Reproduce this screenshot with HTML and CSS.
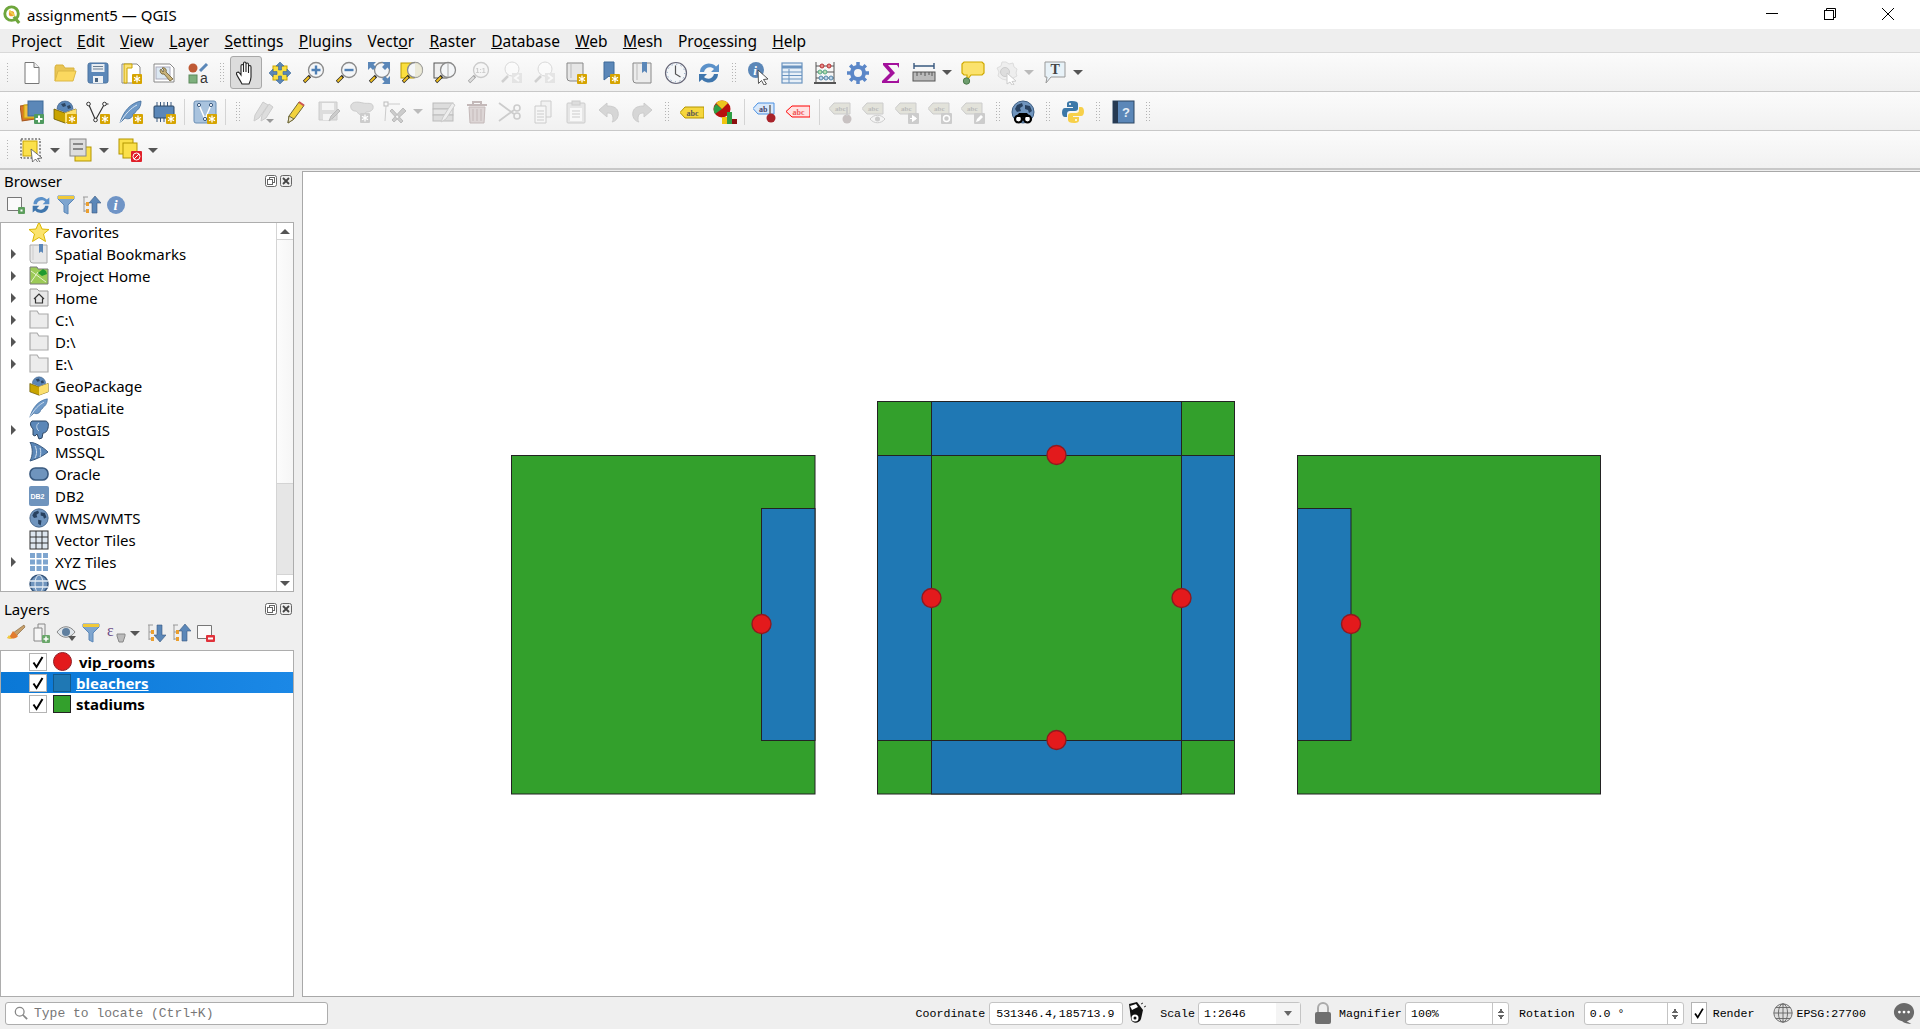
FILE: index.html
```html
<!DOCTYPE html>
<html lang="en">
<head>
    <meta charset="UTF-8">
    <title>assignment5 — QGIS</title>
    <link rel="stylesheet" href="styles.css">
</head>
<body>
<svg class="defs" xmlns="http://www.w3.org/2000/svg">
    <g id="badge"><rect width="10" height="10" rx="1" fill="#d6a400"/><path d="M5 1.5v7M2 3.2l6 3.6M8 3.2L2 6.8" stroke="#fff" stroke-width="1.3"/></g>
    <symbol id="i-new" viewBox="0 0 24 24"><path d="M5 1.5h9l5 5v16H5z" fill="#fff" stroke="#777"/><path d="M14 1.5v5h5" fill="#eee" stroke="#777"/></symbol>
    <symbol id="i-open" viewBox="0 0 24 24"><path d="M2 20V6l1-2h7l2 3h9v4" fill="#e9c553" stroke="#d8b23f"/><path d="M2 20l3-10h18l-3 10z" fill="#fbd85f" stroke="#dcb846"/></symbol>
    <symbol id="i-save" viewBox="0 0 24 24"><rect x="2" y="2" width="20" height="20" rx="2" fill="#5b87b8" stroke="#4a739f"/><rect x="5.5" y="3" width="13" height="8" fill="#e8edf2"/><path d="M7 5.5h10M7 8h10" stroke="#6b7f93"/><rect x="7" y="15" width="10" height="7" fill="#eef1f4"/><rect x="9" y="17" width="3" height="4" fill="#4a6480"/></symbol>
    <symbol id="i-saveas" viewBox="0 0 24 24"><path d="M3 3h15l3 3v16H3z" fill="#fff" stroke="#888"/><path d="M5 3h8v4H8v15H5z" fill="#fbe27a" stroke="#c9a400"/><use href="#badge" x="13" y="13"/></symbol>
    <symbol id="i-layout" viewBox="0 0 24 24"><path d="M2 3h16l4 4v14H2z" fill="#fff" stroke="#888"/><rect x="4" y="6" width="14" height="12" fill="#dce8f2" stroke="#aab"/><path d="M9 8a3 3 0 0 0 3 5l6 7 3-2-7-7a3 3 0 0 0-4-4l2 2-1 2z" fill="#c8b27a" stroke="#6a5a30" stroke-width=".8"/></symbol>
    <symbol id="i-style" viewBox="0 0 24 24"><circle cx="8" cy="7" r="4.5" fill="#bf5a35"/><path d="M15 10l7-7" stroke="#5b87b8" stroke-width="3"/><rect x="4" y="14" width="8" height="8" fill="#7eb07e" stroke="#5c8a5c"/><text x="15" y="22" class="svgtxt">a</text></symbol>
    <symbol id="i-hand" viewBox="0 0 24 24"><path d="M8 23C6 19 3 15 2.5 13c-.5-2 2-2.5 3-1L7 14V5c0-2 2.5-2 2.5 0v6-8.500c0-2 2.500-2 2.500 0V11V3.500c0-2 2.500-2 2.500 0V12V6c0-2 2.500-2 2.500 0v10c0 3-1 5-2 7z" fill="#fff" stroke="#222" stroke-width="1.1"/></symbol>
    <symbol id="i-pan" viewBox="0 0 24 24"><rect x="5" y="5" width="14" height="14" fill="#fbdf3e" stroke="#c9a400"/><path d="M12 1l4 4h-2.500v4h-3V5H8zM12 23l-4-4h2.500v-4h3v4H16zM1 12l4-4v2.500h4v3H5V16zM23 12l-4 4v-2.500h-4v-3h4V8z" fill="#5b87b8" stroke="#3e6a99" stroke-width=".6"/></symbol>
    <g id="lens"><path d="M9 15l-6 6" stroke="#222" stroke-width="3.2"/><path d="M8 16l-4.500 4.500" stroke="#f0c020" stroke-width="2"/><circle cx="15" cy="9" r="7.5" fill="#f4f6f8" stroke="#8a8a8a" stroke-width="1.3"/></g>
    <symbol id="i-zin" viewBox="0 0 24 24"><use href="#lens"/><path d="M15 4.500v9M10.500 9h9" stroke="#4f80b5" stroke-width="2.4"/></symbol>
    <symbol id="i-zout" viewBox="0 0 24 24"><use href="#lens"/><path d="M10.500 9h9" stroke="#4f80b5" stroke-width="2.4"/></symbol>
    <symbol id="i-zfull" viewBox="0 0 24 24"><use href="#lens"/><path d="M1 1h8L6.500 3.500 9 6 6 9 3.500 6.500 1 9zM23 1v8l-2.500-2.500L18 9l-3-3 2.500-2.500L15 1zM23 23h-8l2.500-2.500L15 18l3-3 2.500 2.500L23 15z" fill="#5b87b8"/></symbol>
    <symbol id="i-zsel" viewBox="0 0 24 24"><rect x="1" y="2" width="13" height="15" fill="#fbdf3e" stroke="#b99a00"/><use href="#lens"/><path d="M15 1.500a7.500 7.500 0 0 1 0 15z" fill="#e9e6cf" opacity=".8"/></symbol>
    <symbol id="i-zlay" viewBox="0 0 24 24"><rect x="1" y="2" width="13" height="15" fill="#eee" stroke="#555"/><use href="#lens"/><path d="M15 2v14" stroke="#aaa"/></symbol>
    <symbol id="i-z11" viewBox="0 0 24 24"><use href="#lens"/><text x="9.500" y="12" class="svgmini">1:1</text></symbol>
    <symbol id="i-zlast" viewBox="0 0 24 24"><path d="M9 15l-6 6" stroke="#999" stroke-width="2.5"/><circle cx="13" cy="8" r="7" fill="#fff" stroke="#aaa"/><rect x="13" y="12" width="10" height="10" fill="#ccc"/><path d="M20 14l-4 3 4 3" stroke="#fff" stroke-width="2" fill="none"/></symbol>
    <symbol id="i-znext" viewBox="0 0 24 24"><path d="M9 15l-6 6" stroke="#999" stroke-width="2.5"/><circle cx="13" cy="8" r="7" fill="#fff" stroke="#aaa"/><rect x="13" y="12" width="10" height="10" fill="#ccc"/><path d="M16 14l4 3-4 3" stroke="#fff" stroke-width="2" fill="none"/></symbol>
    <symbol id="i-newmap" viewBox="0 0 24 24"><path d="M2 2h16v18H5a3 3 0 0 1-3-3z" fill="#e6e6e6" stroke="#888"/><path d="M6 2v15" stroke="#bbb"/><use href="#badge" x="12" y="13"/></symbol>
    <symbol id="i-mark" viewBox="0 0 24 24"><path d="M6 1h10v18l-5-4-5 4z" fill="#5b87b8" stroke="#3e6a99"/><use href="#badge" x="12" y="13"/></symbol>
    <symbol id="i-marks" viewBox="0 0 24 24"><path d="M2 2h18v20H5a3 3 0 0 1-3-3z" fill="#ececec" stroke="#888"/><path d="M6 2v17" stroke="#bbb"/><path d="M11 1h5v11l-2.500-2-2.500 2z" fill="#5b87b8"/></symbol>
    <symbol id="i-clock" viewBox="0 0 24 24"><circle cx="12" cy="12" r="10.5" fill="#f4f6f8" stroke="#667" stroke-width="1.2"/><circle cx="12" cy="12" r="8.8" fill="none" stroke="#6a8cb0" stroke-dasharray="1 3.6"/><path d="M11.500 4.500V13l5 3" fill="none" stroke="#555" stroke-width="1.2"/></symbol>
    <symbol id="i-refresh" viewBox="0 0 24 24"><path d="M3 11C3 5 9 1 15 3c2 .6 3 1.500 4 2.500L22 3v8h-8l3-3c-3-3-9-2-10 3z" fill="#5b91c9"/><path d="M21 13c0 6-6 10-12 8-2-.6-3-1.500-4-2.500L2 21v-8h8l-3 3c3 3 9 2 10-3z" fill="#3f76ad"/></symbol>
    <symbol id="i-identify" viewBox="0 0 24 24"><circle cx="9" cy="9" r="8" fill="#5b87b8"/><text x="6.3" y="14" class="svgi">i</text><path d="M11 9l10 9-4.500 .5 3 4.500-2.500 1-2.500-4.500-3 3z" fill="#fff" stroke="#444" stroke-width=".9"/></symbol>
    <symbol id="i-table" viewBox="0 0 24 24"><rect x="2" y="2" width="20" height="20" fill="#e8f0f8" stroke="#6b94c0" stroke-width="1.2"/><path d="M2 6h20" stroke="#6b94c0" stroke-width="3"/><path d="M2 11h20M2 14.500h20M2 18h20M9 8v14" stroke="#6b94c0"/></symbol>
    <symbol id="i-stats" viewBox="0 0 24 24"><path d="M3 1v20M21 1v20M3 5h18M3 11h18M3 17h18" stroke="#555"/><rect x="1" y="21" width="22" height="2" fill="#555"/><g fill="#e58a8a" stroke="#b33"><circle cx="9" cy="5" r="2"/><circle cx="16" cy="5" r="2"/></g><g fill="#b9dcae" stroke="#5a8"><circle cx="7" cy="11" r="2"/><circle cx="12" cy="11" r="2"/></g><g fill="#bcd3ea" stroke="#58a"><circle cx="8" cy="17" r="2"/><circle cx="13" cy="17" r="2"/><circle cx="18" cy="17" r="2"/></g></symbol>
    <symbol id="i-gear" viewBox="0 0 24 24"><circle cx="12" cy="12" r="6" fill="none" stroke="#5b87c8" stroke-width="4"/><path d="M12 1v5M12 18v5M1 12h5M18 12h5M4.200 4.200l3.500 3.500M16.300 16.300l3.500 3.500M4.200 19.800l3.500-3.500M16.300 7.700l3.500-3.500" stroke="#5b87c8" stroke-width="3.5"/></symbol>
    <symbol id="i-sigma" viewBox="0 0 24 24"><path d="M4 2h16v5l-2-3H9l7 8-8 8h10l2-3v5H3v-2l8-8-7-8z" fill="#a3119c"/></symbol>
    <symbol id="i-ruler" viewBox="0 0 24 24"><path d="M2 5h20M2 2v6M22 2v6" stroke="#39597f" stroke-width="1.4"/><rect x="1" y="11" width="22" height="9" fill="#bbb" stroke="#555"/><path d="M5 11v4M9 11v3M13 11v4M17 11v3M20 11v4" stroke="#555"/></symbol>
    <symbol id="i-tip" viewBox="0 0 24 24"><path d="M3 1h18l2 2v9l-2 2H10l-4 5v-5H3l-2-2V3z" fill="#fbe26d" stroke="#cfa900" stroke-width="1.2"/><circle cx="5.5" cy="20" r="3.2" fill="#6f9e6f" stroke="#4c7a4c"/></symbol>
    <symbol id="i-tipoff" viewBox="0 0 24 24"><path d="M12 1l3 2 4-1 1 4 3 2-1 4 1 3-4 2-2 3-9-2-4-3 1-4-2-4 4-2 1-4z" fill="#eee" stroke="#ddd"/><circle cx="11" cy="11" r="4.5" fill="#ddd" stroke="#ccc"/><path d="M13 12l9 8-4 .5 2 3-2 .5-2-3-3 2z" fill="#fff" stroke="#ccc"/></symbol>
    <symbol id="i-text" viewBox="0 0 24 24"><path d="M2 1h20v15H8l-5 6 1-6H2z" fill="#e8f2f8" stroke="#999"/><text x="7.5" y="13" class="svgt">T</text></symbol>
    <symbol id="i-addlayer" viewBox="0 0 24 24"><rect x="1" y="5" width="14" height="15" fill="#d9762b" stroke="#a85a20" transform="rotate(-8 8 12)"/><rect x="4" y="5" width="13" height="13" fill="#f0c040" stroke="#c9a400"/><rect x="8" y="1" width="15" height="15" fill="#5b87b8" stroke="#3e6a99"/><rect x="14" y="14" width="10" height="10" rx="1" fill="#4f9a5f"/><path d="M19 15.500v7M15.500 19h7" stroke="#fff" stroke-width="2"/></symbol>
    <symbol id="i-gpkg" viewBox="0 0 24 24"><path d="M1 9l11 4 11-4v10l-11 4-11-4z" fill="#c9a400" stroke="#665500" stroke-width=".8"/><path d="M12 13l11-4v10l-11 4z" fill="#fbdf6e"/><path d="M4 9a8 8 0 0 1 16 0l-8 3z" fill="#5b87b8" stroke="#39597f" stroke-width=".6"/><path d="M8 4l4-1 1 3-3 1zM14 6l3-1 1 3-3 1z" fill="#2d4663"/></symbol>
    <symbol id="i-gpkg-b" viewBox="0 0 24 24"><use href="#i-gpkg"/><use href="#badge" x="14" y="14"/></symbol>
    <symbol id="i-vector" viewBox="0 0 24 24"><path d="M2.500 4l7 16 9-16 4 0" fill="none" stroke="#333" stroke-width="1.2"/><g fill="#fff" stroke="#333"><circle cx="2.5" cy="4" r="1.8"/><circle cx="9.5" cy="20" r="1.8"/><circle cx="18.5" cy="4" r="1.8"/></g><use href="#badge" x="14" y="14"/></symbol>
    <symbol id="i-feather" viewBox="0 0 24 24"><path d="M1 23C4 12 11 3 22 1c0 6-3 9-5 10 0 0-1 3-3 3 0 4-5 6-8 4z" fill="#6f9ac8" stroke="#3e6a99" stroke-width=".8"/><path d="M1 23C6 14 12 8 18 5" fill="none" stroke="#dbe6f2"/></symbol>
    <symbol id="i-feather-b" viewBox="0 0 24 24"><use href="#i-feather"/><use href="#badge" x="14" y="14"/></symbol>
    <symbol id="i-chip" viewBox="0 0 24 24"><path d="M5 2v4M8.500 2v4M12 2v4M15.500 2v4M19 2v4M5 18v4M8.500 18v4M12 18v4M15.500 18v4M19 18v4" stroke="#39597f"/><rect x="2" y="6" width="20" height="12" rx="1" fill="#5b87b8" stroke="#2d4663"/><use href="#badge" x="14" y="14"/></symbol>
    <symbol id="i-virtual" viewBox="0 0 24 24"><rect x="1" y="1" width="22" height="22" rx="2" fill="#a9c3de" stroke="#6b8fb5"/><path d="M6 5l6 14 6-14" fill="none" stroke="#fff" stroke-width="1.5"/><g fill="#fff" stroke="#39597f"><circle cx="6" cy="5" r="1.6"/><circle cx="12" cy="19" r="1.6"/><circle cx="18" cy="5" r="1.6"/></g><use href="#badge" x="14" y="14"/></symbol>
    <symbol id="i-pencils" viewBox="0 0 24 24"><path d="M3 21l1-6L12 2l5 3-9 13zM10 21l1-6 7-11 4 3-7 11z" fill="#ddd" stroke="#ccc"/><path d="M15 19h8l-4 4z" fill="#999"/></symbol>
    <symbol id="i-pencil" viewBox="0 0 24 24"><path d="M4 23l1-7L15 2l5 3.500L10 19z" fill="#f2d23e" stroke="#706a3a"/><path d="M4 23l1-7 5 3z" fill="#e8e0c0" stroke="#706a3a"/><path d="M15 2l5 3.500" stroke="#c55" stroke-width="2"/></symbol>
    <symbol id="i-savee" viewBox="0 0 24 24"><path d="M2 2h18v18H2z" fill="#ddd" stroke="#ccc"/><rect x="5" y="3" width="12" height="7" fill="#f4f4f4"/><rect x="6" y="14" width="9" height="6" fill="#f4f4f4"/><path d="M12 21l2-5 7-7 2 2-7 7z" fill="#ccc" stroke="#bbb"/></symbol>
    <symbol id="i-blob" viewBox="0 0 24 24"><path d="M1 5c2-4 8-3 12-2s9-1 10 3-3 6-6 6-2 4-6 3-3-4-6-4-5-3-4-6z" fill="#ddd" stroke="#ccc"/><rect x="10" y="13" width="10" height="10" rx="1" fill="#ccc"/><path d="M15 14.500v7M12 16.200l6 3.600M18 16.200l-6 3.600" stroke="#fff" stroke-width="1.3"/></symbol>
    <symbol id="i-tools" viewBox="0 0 24 24"><rect x="1" y="2" width="4" height="4" fill="none" stroke="#bbb"/><path d="M5 4h12M3 6L2 21" stroke="#ccc"/><path d="M9 9l11 12-2 2L7 11zM20 8l-11 12 2 2 12-11z" fill="#ccc" stroke="#bbb"/></symbol>
    <symbol id="i-form" viewBox="0 0 24 24"><rect x="1" y="3" width="20" height="6" fill="#ddd" stroke="#bbb"/><rect x="1" y="9" width="20" height="6" fill="#e6e6e6" stroke="#bbb"/><rect x="1" y="15" width="20" height="6" fill="#ddd" stroke="#bbb"/><path d="M9 22l2-5 9-14 3 2-9 14z" fill="#eee" stroke="#ccc"/></symbol>
    <symbol id="i-trash" viewBox="0 0 24 24"><path d="M2 5h20M8 5V2h8v3" fill="none" stroke="#c4b9b9" stroke-width="2"/><path d="M4 7h16l-1 16H5z" fill="#dcd5d5" stroke="#c4b9b9"/><path d="M8 9v12M12 9v12M16 9v12" stroke="#c4b9b9"/></symbol>
    <symbol id="i-scissors" viewBox="0 0 24 24"><path d="M1 3l15 11M1 21L16 10" stroke="#ccc" stroke-width="1.8"/><circle cx="19" cy="8" r="3" fill="none" stroke="#ccc" stroke-width="1.6"/><circle cx="19" cy="16" r="3" fill="none" stroke="#ccc" stroke-width="1.6"/></symbol>
    <symbol id="i-copy" viewBox="0 0 24 24"><path d="M10 1h10v16H10z" fill="#f2f2f2" stroke="#ccc"/><path d="M4 6h11v17H4z" fill="#f6f6f6" stroke="#ccc"/><path d="M6 11h7M6 14h7M6 17h7M6 20h7" stroke="#ccc"/></symbol>
    <symbol id="i-paste" viewBox="0 0 24 24"><rect x="3" y="3" width="18" height="20" rx="1" fill="#e6e6e6" stroke="#ccc"/><rect x="8" y="1" width="8" height="4" fill="#ddd" stroke="#ccc"/><path d="M6 8h12v13H6z" fill="#f8f8f8"/><path d="M8 11h8M8 14h8M8 17h8" stroke="#ccc"/></symbol>
    <symbol id="i-undo" viewBox="0 0 24 24"><path d="M10 3L2 10l8 7v-4c4 0 6 1 6 6 0 1 0 2-1 3 5-1 7-6 6-10-1-5-6-6-11-6z" fill="#d6d6d6" stroke="#ccc"/></symbol>
    <symbol id="i-redo" viewBox="0 0 24 24"><path d="M14 3l8 7-8 7v-4c-4 0-6 1-6 6 0 1 0 2 1 3-5-1-7-6-6-10 1-5 6-6 11-6z" fill="#d6d6d6" stroke="#ccc"/></symbol>
    <symbol id="i-label" viewBox="0 0 24 24"><path d="M5 7h19v11H5l-5-5.500z" fill="#f5d63d" stroke="#b39500"/><text x="6.5" y="15.5" class="svgabc">abc</text></symbol>
    <symbol id="i-pie" viewBox="0 0 24 24"><circle cx="9" cy="9" r="8.5" fill="#b80f0f"/><path d="M9 9L2 14a8.500 8.500 0 0 1 1-10z" fill="#2f9e44"/><path d="M9 9L3 3a8.500 8.500 0 0 1 12 0z" fill="#ecc51e"/><rect x="9" y="17" width="5" height="7" fill="#f1c40f"/><rect x="14" y="12" width="5" height="12" fill="#2f9e44"/><rect x="19" y="19" width="5" height="5" fill="#8b0f0f"/></symbol>
    <symbol id="i-labelpin" viewBox="0 0 24 24"><path d="M5 3h16v11H5l-5-5.500z" fill="#d8e8fa" stroke="#4a90e2"/><text x="6" y="11.5" class="svgab">ab</text><path d="M17 5v10" stroke="#888" stroke-width="2"/><circle cx="18" cy="18" r="4.5" fill="#a8232a"/></symbol>
    <symbol id="i-labelred" viewBox="0 0 24 24"><path d="M6 6h18v11H6L0 11.500z" fill="#ffe2e2" stroke="#f00"/><text x="6.5" y="14.5" class="svgabcr">abc</text></symbol>
    <g id="dimlabel"><path d="M5 3h16v11H5L0 8.500z" fill="#e2e2da" stroke="#ccc"/><text x="6" y="11" class="svgdim">abc</text></g>
    <symbol id="i-d1" viewBox="0 0 24 24"><use href="#dimlabel"/><circle cx="18" cy="19" r="4.5" fill="#c8c2c2"/><path d="M18 7v9" stroke="#ccc" stroke-width="2"/></symbol>
    <symbol id="i-d2" viewBox="0 0 24 24"><use href="#dimlabel"/><path d="M8 19c4-5 11-5 15 0-4 5-11 5-15 0z" fill="#f4f4f4" stroke="#ccc"/><circle cx="15.5" cy="19" r="2.5" fill="#ccc"/></symbol>
    <symbol id="i-d3" viewBox="0 0 24 24"><use href="#dimlabel"/><rect x="13" y="13" width="11" height="11" rx="1" fill="#ccc"/><path d="M15 18.500h4M17.500 15.500l4 3-4 3z" stroke="#fff" fill="#fff"/></symbol>
    <symbol id="i-d4" viewBox="0 0 24 24"><use href="#dimlabel"/><rect x="13" y="13" width="11" height="11" rx="1" fill="#ccc"/><circle cx="18.5" cy="18.5" r="3" fill="none" stroke="#fff" stroke-width="1.5"/></symbol>
    <symbol id="i-d5" viewBox="0 0 24 24"><use href="#dimlabel"/><rect x="13" y="13" width="11" height="11" rx="1" fill="#ccc"/><path d="M15 22l1-3 4-4 2 2-4 4z" fill="#fff"/></symbol>
    <g id="earth"><circle cx="12" cy="12" r="11" fill="#6f94bd" stroke="#3e5f84"/><path d="M6 5l5-2 1 3-3 2 1 3-4 1-2-3zM14 5l5 1 2 5-3 2-1-3-3-1zM11 14l4 1-1 6-3-2z" fill="#28415f"/></g>
    <symbol id="i-meta" viewBox="0 0 24 24"><use href="#earth"/><circle cx="7.5" cy="19" r="3.5" fill="#fff" stroke="#000" stroke-width="2.2"/><circle cx="16.5" cy="19" r="3.5" fill="#fff" stroke="#000" stroke-width="2.2"/><path d="M5 17l3-4h8l3 4z" fill="#000"/></symbol>
    <symbol id="i-python" viewBox="0 0 24 24"><path d="M11 1c-4 0-5 1-5 3v3h6v1H4c-2 0-3 2-3 4.500S2 17 4 17h2v-3c0-2 1-3 3-3h5c2 0 3-1 3-2.500V4c0-2-2-3-6-3z" fill="#3c78a8"/><circle cx="9" cy="4" r="1" fill="#fff"/><path d="M13 23c4 0 5-1 5-3v-3h-6v-1h8c2 0 3-2 3-4.500S22 7 20 7h-2v3c0 2-1 3-3 3h-5c-2 0-3 1-3 2.500V20c0 2 2 3 6 3z" fill="#f7d04a"/><circle cx="15" cy="20" r="1" fill="#fff"/></symbol>
    <symbol id="i-help" viewBox="0 0 24 24"><rect x="2" y="1" width="21" height="22" fill="#5b87b8" stroke="#2d4663"/><rect x="2" y="1" width="5" height="22" fill="#263a52"/><text x="11" y="17" class="svgq">?</text></symbol>
    <symbol id="i-select" viewBox="0 0 24 24"><rect x="1" y="1" width="19" height="19" fill="none" stroke="#333" stroke-dasharray="2 1.5"/><rect x="3" y="3" width="14" height="15" fill="#fbe04a" stroke="#c9a400"/><path d="M11 11l11 9-4.500 .5 2.500 3.500-2 .5-2.500-3.500-3 3z" fill="#fff" stroke="#555" stroke-width=".8"/></symbol>
    <symbol id="i-attr" viewBox="0 0 24 24"><rect x="6" y="9" width="16" height="14" fill="#fbe04a" stroke="#b39500"/><rect x="1" y="1" width="16" height="17" fill="#ddd" stroke="#888"/><path d="M4 6h10M4 11h10" stroke="#888" stroke-width="2"/></symbol>
    <symbol id="i-desel" viewBox="0 0 24 24"><rect x="1" y="1" width="14" height="15" fill="#fbe04a" stroke="#b39500"/><rect x="5" y="5" width="14" height="15" fill="#fbe04a" stroke="#b39500"/><rect x="13" y="13" width="11" height="11" rx="1" fill="#e0202a"/><circle cx="18.5" cy="18.5" r="3.5" fill="none" stroke="#fff"/><path d="M16 21l5-5" stroke="#fff"/></symbol>

    <symbol id="t-star" viewBox="0 0 20 20"><path d="M10 0l3 7 7 .5-5.500 4.500 2 7.500L10 15.500 3.500 19.500l2-7.500L0 7.500 7 7z" fill="#fbe36c" stroke="#dab600"/></symbol>
    <symbol id="t-marks" viewBox="0 0 20 20"><path d="M1 1h17v18H4a3 3 0 0 1-3-3z" fill="#e8e8e8" stroke="#aaa"/><path d="M4 1v15" stroke="#ccc"/><path d="M10 0h4v9l-2-1.500L10 9z" fill="#5b87b8"/></symbol>
    <symbol id="t-phome" viewBox="0 0 20 20"><path d="M1 1h7l1 2h10v15H1z" fill="#9ccb57" stroke="#7a7a7a"/><path d="M2 5l15 11M2 16L9 6" stroke="#e6f2cd"/><path d="M9 7l5-4 3 2 1 3-5 2z" fill="#1f9a2f"/></symbol>
    <symbol id="t-home" viewBox="0 0 20 20"><path d="M1 1h7l2 2h9v15H1z" fill="#e8e8e8" stroke="#999"/><path d="M5 11l5-5 5 5M6.500 10.500V15h7v-4.500" fill="none" stroke="#333" stroke-width="1.2"/></symbol>
    <symbol id="t-folder" viewBox="0 0 20 20"><path d="M1 1h7l2 3h9v14H1z" fill="#ececec" stroke="#aaa" stroke-width="1.2"/></symbol>
    <symbol id="t-elephant" viewBox="0 0 20 20"><path d="M3 1h13c3 0 4 3 3 7s-3 5-5 5l-1 5-3 1-2-5-2 2-2-1V9C2 7 0 3 3 1z" fill="#5b87b8" stroke="#2d4663"/><path d="M10 3c-3 1-3 6 0 8" fill="none" stroke="#c6d8ea"/></symbol>
    <symbol id="t-mssql" viewBox="0 0 20 20"><path d="M1 0c6 1 13 5 18 10-5 4-11 7-18 9 3-6 3-13 0-19z" fill="#5b87b8" stroke="#39597f"/><path d="M6 4c2 4 2 8 0 12M11 6c1 3 1 6 0 9" fill="none" stroke="#cfdeed"/></symbol>
    <symbol id="t-oracle" viewBox="0 0 20 20"><rect x="1" y="4" width="18" height="12" rx="5.5" fill="#6f94bd" stroke="#39597f" stroke-width="1.6"/></symbol>
    <symbol id="t-db2" viewBox="0 0 20 20"><rect width="20" height="20" rx="2" fill="#6f94bd"/><text x="1.5" y="12.5" class="svgdb">DB2</text></symbol>
    <symbol id="t-globe" viewBox="0 0 24 24"><use href="#earth"/></symbol>
    <symbol id="t-grid" viewBox="0 0 20 20"><rect x="1" y="1" width="18" height="18" fill="#dde6ef" stroke="#333"/><path d="M7 1v18M13 1v18M1 7h18M1 13h18" stroke="#333"/></symbol>
    <symbol id="t-xyz" viewBox="0 0 20 20"><g fill="#7ea5cf"><rect width="5" height="5" x="1" y="1"/><rect width="5" height="5" x="7.5" y="1"/><rect width="5" height="5" x="14" y="1"/><rect width="5" height="5" x="1" y="7.5"/><rect width="5" height="5" x="7.5" y="7.5"/><rect width="5" height="5" x="14" y="7.5"/><rect width="5" height="5" x="1" y="14"/><rect width="5" height="5" x="7.5" y="14"/><rect width="5" height="5" x="14" y="14"/></g></symbol>
    <symbol id="t-wcs" viewBox="0 0 20 20"><circle cx="10" cy="10" r="9" fill="#6f94bd" stroke="#39597f" stroke-width="1.5"/><path d="M1 7h18M1 13h18" stroke="#e6edf5" stroke-width="1.5"/><ellipse cx="10" cy="10" rx="4" ry="9" fill="none" stroke="#e6edf5"/></symbol>

    <symbol id="s-add" viewBox="0 0 20 20"><path d="M1.500 2.500h14v13h-14z" fill="#fafafa" stroke="#777"/><rect x="12" y="12" width="7" height="7" rx="1" fill="#5c9e5c"/><rect x="14.5" y="14.5" width="2" height="2" fill="#fff"/></symbol>
    <symbol id="s-filter" viewBox="0 0 20 20"><path d="M2 1h16v3l-6 6v9l-4-2v-7L2 4z" fill="#7ea5cf" stroke="#5b87b8"/><rect x="2" y="1" width="16" height="3" fill="#f0c93a"/></symbol>
    <symbol id="s-coll" viewBox="0 0 20 20"><path d="M2 2h5M3 2v15M3 9h4M3 16h4" stroke="#999" fill="none"/><rect x="5" y="7" width="3" height="4" fill="#eb9f2f"/><rect x="5" y="14" width="3" height="4" fill="#eb9f2f"/><path d="M14 1l6 7h-4v10h-5V8H8z" fill="#5b87b8" stroke="#39597f" stroke-width=".6"/></symbol>
    <symbol id="s-exp" viewBox="0 0 20 20"><path d="M2 2h5M3 2v15M3 9h4M3 16h4" stroke="#999" fill="none"/><rect x="5" y="7" width="3" height="4" fill="#eb9f2f"/><rect x="5" y="14" width="3" height="4" fill="#eb9f2f"/><path d="M14 19l6-7h-4V2h-5v10H8z" fill="#5b87b8" stroke="#39597f" stroke-width=".6"/></symbol>
    <symbol id="s-info" viewBox="0 0 20 20"><circle cx="10" cy="10" r="9" fill="#6f94c6"/><text x="7.5" y="15" class="svgi2">i</text></symbol>
    <symbol id="s-brush" viewBox="0 0 20 20"><path d="M7 10L18 2l1 2-9 9z" fill="#c9a06a" stroke="#7a5a30" stroke-width=".6"/><path d="M7 8l5 5c-2 3-6 3-11 2 3-1 4-4 6-7z" fill="#e27b2e"/><path d="M3 12l-2 3 5 1z" fill="#f2cc3c"/></symbol>
    <symbol id="s-group" viewBox="0 0 20 20"><path d="M7 1h7v13H7z" fill="#eee" stroke="#888"/><path d="M3 5h8v13H3z" fill="#f6f6f6" stroke="#888"/><rect x="11" y="12" width="8" height="8" rx="1" fill="#6aa76a"/><path d="M15 13.500v5M12.500 16h5" stroke="#fff" stroke-width="1.5"/></symbol>
    <symbol id="s-eye" viewBox="0 0 20 20"><path d="M1 9c5-7 13-7 18 0-5 7-13 7-18 0z" fill="#dfe5ea" stroke="#888"/><circle cx="10" cy="9" r="4" fill="#5f7f9f"/><path d="M12 13h8l-4 5z" fill="#555"/></symbol>
    <symbol id="s-eps" viewBox="0 0 20 20"><text x="1" y="13" class="svgeps">ε</text><path d="M11 11h8v2l-2 6h-4l-2-6z" fill="#bbb" stroke="#888"/></symbol>
    <symbol id="s-rem" viewBox="0 0 20 20"><path d="M1.500 2.500h14v13h-14z" fill="#fafafa" stroke="#777"/><rect x="10" y="12" width="9" height="7" rx="1" fill="#e0313a"/><rect x="12" y="14.5" width="5" height="2" fill="#fff"/></symbol>
    <symbol id="s-search" viewBox="0 0 16 16"><circle cx="6.5" cy="6.5" r="5" fill="none" stroke="#888" stroke-width="1.5"/><path d="M10 10l5 5" stroke="#888" stroke-width="2"/></symbol>
    <symbol id="s-mouse" viewBox="0 0 20 24"><path d="M3 3l8-2 6 8-2 9c-2 5-9 5-10 0z" fill="#111"/><path d="M4 5l6-2 2 3-6 3z" fill="#fff"/><circle cx="9" cy="17" r="3.5" fill="#fff"/><circle cx="9" cy="17" r="1.5" fill="#111"/><path d="M15 3l2-1M18 6l2-1" stroke="#333"/></symbol>
    <symbol id="s-lock" viewBox="0 0 18 24"><path d="M4 11V7a5 5 0 0 1 10 0v4" fill="none" stroke="#aaa" stroke-width="2"/><rect x="1" y="11" width="16" height="12" rx="2" fill="#6f6f6f"/></symbol>
    <symbol id="s-crs" viewBox="0 0 24 24"><circle cx="12" cy="12" r="10" fill="#ddd" stroke="#666"/><path d="M2 12h20M12 2v20M4 6h16M4 18h16" stroke="#666"/><ellipse cx="12" cy="12" rx="5" ry="10" fill="none" stroke="#666"/></symbol>
    <symbol id="s-msg" viewBox="0 0 24 24"><path d="M12 1c6 0 11 4 11 10s-4 9-8 10l5 3c-4 0-8-1-10-3-5-1-9-5-9-10S6 1 12 1z" fill="#6a6a6a"/><circle cx="7" cy="11" r="1.5" fill="#fff"/><circle cx="12" cy="11" r="1.5" fill="#fff"/><circle cx="17" cy="11" r="1.5" fill="#fff"/></symbol>
    <symbol id="s-float" viewBox="0 0 12 12"><rect x=".5" y=".5" width="11" height="11" rx="2" fill="#fff" stroke="#666"/><rect x="4.5" y="2.5" width="5" height="5" fill="none" stroke="#666"/><rect x="2.5" y="4.5" width="5" height="5" fill="#fff" stroke="#666"/></symbol>
    <symbol id="s-close" viewBox="0 0 12 12"><rect x=".5" y=".5" width="11" height="11" rx="2" fill="#eee" stroke="#666"/><path d="M3 3l6 6M9 3l-6 6" stroke="#444" stroke-width="1.8"/></symbol>
    <symbol id="s-tick" viewBox="0 0 16 16"><path d="M3.500 8.500l3 4.500 6-10" fill="none" stroke="#000" stroke-width="2"/></symbol>
</svg>

<div class="app">
    <header class="titlebar">
        <svg class="logo" viewBox="0 0 20 22"><circle cx="9.5" cy="9.5" r="7.5" fill="#fff" stroke="#6ea63c" stroke-width="3.2"/><path d="M12 13l6 7" stroke="#6ea63c" stroke-width="3.5"/><circle cx="9.5" cy="9.5" r="3" fill="#f0a030"/><path d="M7 6l6 6" stroke="#ecd14e" stroke-width="2"/></svg>
        <span class="title">assignment5 — QGIS</span>
        <div class="winbtns">
            <svg class="winbtn" viewBox="0 0 12 12"><path d="M0 5.500h12" stroke="#000"/></svg>
            <svg class="winbtn" viewBox="0 0 12 12"><path d="M2.500 2.500V.5h9v9h-2" fill="none" stroke="#000"/><rect x=".5" y="2.5" width="9" height="9" fill="none" stroke="#000"/></svg>
            <svg class="winbtn" viewBox="0 0 12 12"><path d="M0 0l12 12M12 0L0 12" stroke="#000"/></svg>
        </div>
    </header>

    <nav class="menubar">
        <span>Pro<u>j</u>ect</span><span><u>E</u>dit</span><span><u>V</u>iew</span><span><u>L</u>ayer</span><span><u>S</u>ettings</span><span><u>P</u>lugins</span><span>Vect<u>o</u>r</span><span><u>R</u>aster</span><span><u>D</u>atabase</span><span><u>W</u>eb</span><span><u>M</u>esh</span><span>Pro<u>c</u>essing</span><span><u>H</u>elp</span>
    </nav>

    <div class="toolbar">
        <span class="grip first"></span>
        <span class="btn"><svg><use href="#i-new"/></svg></span>
        <span class="btn"><svg><use href="#i-open"/></svg></span>
        <span class="btn"><svg><use href="#i-save"/></svg></span>
        <span class="btn"><svg><use href="#i-saveas"/></svg></span>
        <span class="btn"><svg><use href="#i-layout"/></svg></span>
        <span class="btn"><svg><use href="#i-style"/></svg></span>
        <span class="grip"></span>
        <span class="btn active"><svg><use href="#i-hand"/></svg></span>
        <span class="btn"><svg><use href="#i-pan"/></svg></span>
        <span class="btn"><svg><use href="#i-zin"/></svg></span>
        <span class="btn"><svg><use href="#i-zout"/></svg></span>
        <span class="btn"><svg><use href="#i-zfull"/></svg></span>
        <span class="btn"><svg><use href="#i-zsel"/></svg></span>
        <span class="btn"><svg><use href="#i-zlay"/></svg></span>
        <span class="btn off"><svg><use href="#i-z11"/></svg></span>
        <span class="btn off"><svg><use href="#i-zlast"/></svg></span>
        <span class="btn off"><svg><use href="#i-znext"/></svg></span>
        <span class="btn"><svg><use href="#i-newmap"/></svg></span>
        <span class="btn"><svg><use href="#i-mark"/></svg></span>
        <span class="btn"><svg><use href="#i-marks"/></svg></span>
        <span class="btn"><svg><use href="#i-clock"/></svg></span>
        <span class="btn"><svg><use href="#i-refresh"/></svg></span>
        <span class="grip"></span>
        <span class="btn"><svg><use href="#i-identify"/></svg></span>
        <span class="btn"><svg><use href="#i-table"/></svg></span>
        <span class="btn"><svg><use href="#i-stats"/></svg></span>
        <span class="btn"><svg><use href="#i-gear"/></svg></span>
        <span class="btn"><svg><use href="#i-sigma"/></svg></span>
        <span class="btn"><svg><use href="#i-ruler"/></svg></span><span class="drop"></span>
        <span class="btn"><svg><use href="#i-tip"/></svg></span>
        <span class="btn"><svg><use href="#i-tipoff"/></svg></span><span class="drop dim"></span>
        <span class="btn"><svg><use href="#i-text"/></svg></span><span class="drop"></span>
    </div>

    <div class="toolbar">
        <span class="grip first"></span>
        <span class="btn"><svg><use href="#i-addlayer"/></svg></span>
        <span class="btn"><svg><use href="#i-gpkg-b"/></svg></span>
        <span class="btn"><svg><use href="#i-vector"/></svg></span>
        <span class="btn"><svg><use href="#i-feather-b"/></svg></span>
        <span class="btn"><svg><use href="#i-chip"/></svg></span>
        <span class="sep"></span>
        <span class="btn"><svg><use href="#i-virtual"/></svg></span>
        <span class="sep"></span>
        <span class="grip"></span>
        <span class="btn"><svg><use href="#i-pencils"/></svg></span>
        <span class="btn"><svg><use href="#i-pencil"/></svg></span>
        <span class="btn"><svg><use href="#i-savee"/></svg></span>
        <span class="btn"><svg><use href="#i-blob"/></svg></span>
        <span class="btn"><svg><use href="#i-tools"/></svg></span><span class="drop dim"></span>
        <span class="btn"><svg><use href="#i-form"/></svg></span>
        <span class="btn"><svg><use href="#i-trash"/></svg></span>
        <span class="btn"><svg><use href="#i-scissors"/></svg></span>
        <span class="btn"><svg><use href="#i-copy"/></svg></span>
        <span class="btn"><svg><use href="#i-paste"/></svg></span>
        <span class="btn"><svg><use href="#i-undo"/></svg></span>
        <span class="btn"><svg><use href="#i-redo"/></svg></span>
        <span class="grip"></span>
        <span class="btn"><svg><use href="#i-label"/></svg></span>
        <span class="btn"><svg><use href="#i-pie"/></svg></span>
        <span class="sep narrow"></span>
        <span class="btn"><svg><use href="#i-labelpin"/></svg></span>
        <span class="btn"><svg><use href="#i-labelred"/></svg></span>
        <span class="sep wide"></span>
        <span class="btn"><svg><use href="#i-d1"/></svg></span>
        <span class="btn"><svg><use href="#i-d2"/></svg></span>
        <span class="btn"><svg><use href="#i-d3"/></svg></span>
        <span class="btn"><svg><use href="#i-d4"/></svg></span>
        <span class="btn"><svg><use href="#i-d5"/></svg></span>
        <span class="grip"></span>
        <span class="btn"><svg><use href="#i-meta"/></svg></span>
        <span class="grip"></span>
        <span class="btn"><svg><use href="#i-python"/></svg></span>
        <span class="grip"></span>
        <span class="btn"><svg><use href="#i-help"/></svg></span>
        <span class="grip"></span>
    </div>

    <div class="toolbar">
        <span class="grip first"></span>
        <span class="btn"><svg><use href="#i-select"/></svg></span><span class="drop"></span>
        <span class="btn"><svg><use href="#i-attr"/></svg></span><span class="drop"></span>
        <span class="btn"><svg><use href="#i-desel"/></svg></span><span class="drop"></span>
    </div>

    <main class="main">
        <aside class="docks">
            <section class="dock browser">
                <div class="dock-title"><span>Browser</span><svg class="dock-btn"><use href="#s-float"/></svg><svg class="dock-btn"><use href="#s-close"/></svg></div>
                <div class="dock-tools">
                    <svg><use href="#s-add"/></svg>
                    <svg><use href="#i-refresh"/></svg>
                    <svg><use href="#s-filter"/></svg>
                    <svg><use href="#s-coll"/></svg>
                    <svg><use href="#s-info"/></svg>
                </div>
                <div class="tree-box">
                    <ul class="tree">
                        <li><i class="arrow none"></i><svg><use href="#t-star"/></svg>Favorites</li>
                        <li><i class="arrow"></i><svg><use href="#t-marks"/></svg>Spatial Bookmarks</li>
                        <li><i class="arrow"></i><svg><use href="#t-phome"/></svg>Project Home</li>
                        <li><i class="arrow"></i><svg><use href="#t-home"/></svg>Home</li>
                        <li><i class="arrow"></i><svg><use href="#t-folder"/></svg>C:\</li>
                        <li><i class="arrow"></i><svg><use href="#t-folder"/></svg>D:\</li>
                        <li><i class="arrow"></i><svg><use href="#t-folder"/></svg>E:\</li>
                        <li><i class="arrow none"></i><svg><use href="#i-gpkg"/></svg>GeoPackage</li>
                        <li><i class="arrow none"></i><svg><use href="#i-feather"/></svg>SpatiaLite</li>
                        <li><i class="arrow"></i><svg><use href="#t-elephant"/></svg>PostGIS</li>
                        <li><i class="arrow none"></i><svg><use href="#t-mssql"/></svg>MSSQL</li>
                        <li><i class="arrow none"></i><svg><use href="#t-oracle"/></svg>Oracle</li>
                        <li><i class="arrow none"></i><svg><use href="#t-db2"/></svg>DB2</li>
                        <li><i class="arrow none"></i><svg><use href="#t-globe"/></svg>WMS/WMTS</li>
                        <li><i class="arrow none"></i><svg><use href="#t-grid"/></svg>Vector Tiles</li>
                        <li><i class="arrow"></i><svg><use href="#t-xyz"/></svg>XYZ Tiles</li>
                        <li><i class="arrow none"></i><svg><use href="#t-wcs"/></svg>WCS</li>
                    </ul>
                    <div class="scrollbar">
                        <div class="sb-btn"><i class="tri-up"></i></div>
                        <div class="sb-thumb"></div>
                        <div class="sb-track"></div>
                        <div class="sb-btn"><i class="tri-down"></i></div>
                    </div>
                </div>
            </section>
            <section class="dock layers">
                <div class="dock-title"><span>Layers</span><svg class="dock-btn"><use href="#s-float"/></svg><svg class="dock-btn"><use href="#s-close"/></svg></div>
                <div class="dock-tools">
                    <svg><use href="#s-brush"/></svg>
                    <svg><use href="#s-group"/></svg>
                    <svg><use href="#s-eye"/></svg>
                    <svg><use href="#s-filter"/></svg>
                    <svg><use href="#s-eps"/></svg><span class="drop mini"></span>
                    <svg><use href="#s-exp"/></svg>
                    <svg><use href="#s-coll"/></svg>
                    <svg><use href="#s-rem"/></svg>
                </div>
                <ul class="layer-tree">
                    <li class="layer"><span class="check"><svg><use href="#s-tick"/></svg></span><span class="sym-point"></span><b class="point-name">vip_rooms</b></li>
                    <li class="layer selected"><span class="check"><svg><use href="#s-tick"/></svg></span><span class="sym-fill blue"></span><b><u>bleachers</u></b></li>
                    <li class="layer"><span class="check"><svg><use href="#s-tick"/></svg></span><span class="sym-fill green"></span><b>stadiums</b></li>
                </ul>
            </section>
        </aside>

        <div class="canvas">
            <!-- map drawn in page pixels, so viewBox starts where the canvas starts -->
            <svg class="map" viewBox="303 172 1617 824" preserveAspectRatio="xMinYMin">
                <g class="stadium">
                    <rect x="511.5" y="455.5" width="303.5" height="338.5"/>
                    <rect x="877.5" y="401.5" width="357" height="392.5"/>
                    <rect x="1297.5" y="455.5" width="303" height="338.5"/>
                </g>
                <g class="bleacher">
                    <rect x="761.5" y="508.5" width="53.5" height="232"/>
                    <rect x="931.5" y="401.5" width="250" height="54"/>
                    <rect x="931.5" y="740.5" width="250" height="53.5"/>
                    <rect x="877.5" y="455.5" width="54" height="285"/>
                    <rect x="1181.5" y="455.5" width="53" height="285"/>
                    <rect x="1297.5" y="508.5" width="53.5" height="232"/>
                </g>
                <g class="vip">
                    <circle cx="761.5" cy="624" r="9.5"/>
                    <circle cx="1056.5" cy="455" r="9.5"/>
                    <circle cx="1056.5" cy="740" r="9.5"/>
                    <circle cx="931.5" cy="598" r="9.5"/>
                    <circle cx="1181.5" cy="598" r="9.5"/>
                    <circle cx="1351" cy="624" r="9.5"/>
                </g>
            </svg>
        </div>
    </main>

    <footer class="statusbar">
        <div class="locator"><svg><use href="#s-search"/></svg><span>Type to locate (Ctrl+K)</span></div>
        <div class="status-right">
            <span>Coordinate</span>
            <span class="field coord">531346.4,185713.9</span>
            <svg class="st-mouse"><use href="#s-mouse"/></svg>
            <span class="st-scale">Scale</span>
            <span class="field scale">1:2646<i class="combo-arrow"></i></span>
            <svg class="st-lock"><use href="#s-lock"/></svg>
            <span>Magnifier</span>
            <span class="field spin mag">100%<i class="spinner"></i></span>
            <span class="st-rot">Rotation</span>
            <span class="field spin rot">0.0 °<i class="spinner"></i></span>
            <span class="check small"><svg><use href="#s-tick"/></svg></span>
            <span>Render</span>
            <svg class="st-crs"><use href="#s-crs"/></svg>
            <span class="st-epsg">EPSG:27700</span>
            <svg class="st-msg"><use href="#s-msg"/></svg>
        </div>
    </footer>
</div>
</body>
</html>
```

FILE: styles.css
```css
* {
    box-sizing: border-box;
}

html, body {
    margin: 0;
    height: 100%;
    overflow: hidden;
}

body {
    font-family: "Noto Sans", "Open Sans", sans-serif;
    font-size: 15px;
    color: #000;
    background: #efefef;
}

.defs {
    display: none;
}

.svgtxt { font: 14px "Liberation Sans", sans-serif; fill: #333; }
.svgmini { font: bold 7px "Liberation Sans", sans-serif; fill: #888; }
.svgi { font: italic bold 13px "Liberation Serif", serif; fill: #fff; }
.svgi2 { font: italic bold 15px "Liberation Serif", serif; fill: #fff; }
.svgt { font: bold 14px "Liberation Serif", serif; fill: #444; }
.svgabc { font: bold 8px "Liberation Serif", serif; fill: #555; }
.svgab { font: bold 8px "Liberation Serif", serif; fill: #446; }
.svgabcr { font: bold 8px "Liberation Serif", serif; fill: #e55; }
.svgdim { font: bold 7px "Liberation Serif", serif; fill: #bbb; }
.svgq { font: bold 13px "Liberation Sans", sans-serif; fill: #e6eef6; }
.svgdb { font: bold 7px "Liberation Sans", sans-serif; fill: #fff; }
.svgeps { font: 16px "Liberation Serif", serif; fill: #6a4a86; }

.app {
    display: flex;
    flex-direction: column;
    height: 100%;
}

/* title bar */
.titlebar {
    height: 29px;
    flex: none;
    background: #fff;
    display: flex;
    align-items: center;
    padding-left: 3px;
}

.logo {
    width: 18px;
    height: 20px;
}

.title {
    margin-left: 6px;
    font-size: 15px;
}

.winbtns {
    margin-left: auto;
    display: flex;
    gap: 46px;
    padding-right: 26px;
    margin-top: -1px;
}

.winbtn {
    width: 12px;
    height: 12px;
}

/* menu */
.menubar {
    height: 24px;
    flex: none;
    background: #eeeeee;
    display: flex;
    align-items: center;
    padding-left: 3.5px;
    border-bottom: 1px solid #d9d9d9;
    font-size: 15.5px;
}

.menubar span {
    padding: 0 7.65px;
}

/* toolbars */
.toolbar {
    height: 39px;
    flex: none;
    display: flex;
    align-items: center;
    padding-top: 1px;
    background: linear-gradient(#fbfbfb, #f1f1f1);
    border-bottom: 1px solid #c8c8c8;
}

.toolbar:nth-of-type(3) {
    border-bottom-width: 2px;
}

.btn {
    width: 33px;
    height: 33px;
    flex: none;
    display: flex;
    align-items: center;
    justify-content: center;
    border: 1px solid transparent;
}

.btn svg {
    width: 24px;
    height: 24px;
}

.btn.off svg {
    filter: grayscale(1) opacity(.4);
}

.btn.active {
    width: 32px;
    margin-right: 1px;
    background: #dcdcdc;
    border-color: #a8a8a8;
    border-radius: 3px;
}

.grip {
    width: 17px;
    height: 22px;
    flex: none;
    padding: 0 6px;
    background: radial-gradient(circle, #b4b4b4 .7px, transparent 1px) 0 0 / 3px 3px repeat;
    background-clip: content-box;
}

.grip.first {
    width: 15px;
    padding: 0 5px;
}

.sep {
    width: 8px;
    height: 26px;
    flex: none;
    background: linear-gradient(#d4d4d4, #d4d4d4) center / 1px 100% no-repeat;
}

.sep.narrow { width: 7px; }
.sep.wide { width: 10px; }

.drop {
    width: 16px;
    flex: none;
    display: flex;
    align-items: center;
}

.drop::after {
    content: "";
    border-left: 5px solid transparent;
    border-right: 5px solid transparent;
    border-top: 5px solid #555;
    margin-left: 2px;
}

.drop.dim::after {
    border-top-color: #bbb;
}

/* docks */
.main {
    flex: 1;
    min-height: 0;
    display: flex;
}

.docks {
    width: 302px;
    flex: none;
    display: flex;
    flex-direction: column;
    padding-right: 8px;
}

.dock.browser {
    height: 422px;
    flex: none;
    display: flex;
    flex-direction: column;
}

.dock.layers {
    flex: 1;
    min-height: 0;
    margin-top: 6px;
    display: flex;
    flex-direction: column;
}

.dock-title {
    height: 22px;
    flex: none;
    display: flex;
    align-items: center;
    padding: 0 2px 0 4px;
    gap: 2px;
}

.dock-title span {
    flex: 1;
}

.dock-btn {
    width: 12px;
    height: 12px;
    margin-left: 1px;
}

.dock-tools {
    height: 30px;
    flex: none;
    display: flex;
    align-items: center;
    padding: 0 0 4px 6px;
    gap: 5px;
}

.dock-tools svg {
    width: 20px;
    height: 20px;
}

.dock-tools .drop.mini {
    width: 14px;
    margin-left: -3px;
    margin-right: -1px;
}

.tree-box {
    flex: 1;
    min-height: 0;
    display: flex;
    background: #fff;
    border: 1px solid #adadad;
    overflow: hidden;
}

.tree {
    flex: 1;
    margin: -2px 0 0;
    padding: 0;
    list-style: none;
    overflow: hidden;
}

.tree li {
    height: 22px;
    display: flex;
    align-items: center;
    white-space: nowrap;
}

.tree li svg {
    width: 20px;
    height: 20px;
    margin-right: 6px;
    flex: none;
}

.arrow {
    width: 28px;
    flex: none;
    padding-left: 10px;
}

.arrow::before {
    content: "";
    display: block;
    border-top: 5px solid transparent;
    border-bottom: 5px solid transparent;
    border-left: 5px solid #555;
    width: 0;
}

.arrow.none::before {
    display: none;
}

.scrollbar {
    width: 17px;
    flex: none;
    display: flex;
    flex-direction: column;
    border-left: 1px solid #d4d4d4;
}

.sb-btn {
    height: 17px;
    flex: none;
    display: flex;
    align-items: center;
    justify-content: center;
    background: #fff;
    border-bottom: 1px solid #d4d4d4;
}

.sb-btn:last-child {
    border-bottom: 0;
    border-top: 1px solid #d4d4d4;
}

.tri-up {
    border-left: 5px solid transparent;
    border-right: 5px solid transparent;
    border-bottom: 5px solid #555;
}

.tri-down {
    border-left: 5px solid transparent;
    border-right: 5px solid transparent;
    border-top: 5px solid #555;
}

.sb-thumb {
    height: 244px;
    flex: none;
    background: linear-gradient(90deg, #fcfcfc, #f6f6f6);
    border-bottom: 1px solid #d4d4d4;
}

.sb-track {
    flex: 1;
    background: #e6e6e6;
}

/* layers */
.layer-tree {
    flex: 1;
    margin: 0;
    padding: 0;
    list-style: none;
    background: #fff;
    border: 1px solid #adadad;
}

.layer {
    height: 21px;
    display: flex;
    align-items: center;
    padding-left: 28px;
}

.layer.selected {
    background: linear-gradient(90deg, #0a78d6, #1b88e6);
    color: #fff;
}

.layer b {
    margin-left: 5px;
}

.layer b.point-name {
    margin-left: 7px;
}

.check {
    width: 18px;
    height: 18px;
    flex: none;
    background: #fff;
    border: 1px solid #b4b4b4;
    display: flex;
    align-items: center;
    justify-content: center;
}

.check svg {
    width: 16px;
    height: 16px;
}

.sym-point {
    width: 19px;
    height: 19px;
    margin-left: 6px;
    border-radius: 50%;
    background: #e31a1c;
    border: 1px solid #911f25;
}

.sym-fill {
    width: 18px;
    height: 18px;
    margin-left: 6px;
    border: 1px solid #232323;
}

.sym-fill.blue { background: #1f78b4; border-color: #135a8c; }
.sym-fill.green { background: #33a02c; }

/* map */
.canvas {
    flex: 1;
    min-width: 0;
    background: #fff;
    border: 1px solid #a8a8a8;
    border-right: 0;
    margin-top: 1px;
}

.map {
    display: block;
    width: 100%;
    height: 100%;
}

.stadium rect {
    fill: #33a02c;
    stroke: #232323;
}

.bleacher rect {
    fill: #1f78b4;
    stroke: #232323;
}

.vip circle {
    fill: #e31a1c;
    stroke: #8f1a20;
    stroke-width: 1.4;
}

/* status bar */
.statusbar {
    height: 32px;
    flex: none;
    display: flex;
    align-items: center;
    justify-content: space-between;
    font-family: "Liberation Mono", monospace;
    font-size: 11.6px;
    padding: 0 5px;
}

.locator {
    width: 323px;
    height: 23px;
    display: flex;
    align-items: center;
    background: #fff;
    border: 1px solid #adadad;
    border-radius: 3px;
    padding-left: 8px;
    font-size: 13px;
    color: #777;
}

.locator svg {
    width: 14px;
    height: 14px;
    margin-right: 6px;
}

.status-right {
    display: flex;
    align-items: center;
}

.field {
    height: 23px;
    display: flex;
    align-items: center;
    background: #fff;
    border: 1px solid #c4c4c4;
    border-radius: 3px;
    padding-left: 5px;
    margin-left: 3px;
}

.coord { width: 134px; margin-left: 4px; padding-left: 6px; }
.scale { width: 103px; }
.mag { width: 104px; margin-left: 3.4px; }
.rot { width: 100px; margin-left: 9px; }

.combo-arrow {
    margin-left: auto;
    width: 24px;
    height: 100%;
    display: flex;
    align-items: center;
    justify-content: center;
    background: #f4f4f4;
}

.combo-arrow::after {
    content: "";
    border-left: 4px solid transparent;
    border-right: 4px solid transparent;
    border-top: 5px solid #666;
}

.spinner {
    margin-left: auto;
    width: 16px;
    height: 100%;
    border-left: 1px solid #c4c4c4;
    background:
        conic-gradient(from 150deg at 50% 0, #666 60deg, transparent 0) center 5px / 8px 5px no-repeat,
        conic-gradient(from -30deg at 50% 100%, #666 60deg, transparent 0) center 12px / 8px 5px no-repeat;
}

.st-mouse {
    width: 20px;
    height: 24px;
    margin-left: 3px;
}

.st-scale { margin-left: 14px; }

.st-lock {
    width: 18px;
    height: 24px;
    margin: 0 7px 0 13px;
}

.st-rot { margin-left: 10px; }

.check.small {
    width: 16px;
    height: 22px;
    margin: 0 6px 0 7px;
}

.check.small svg {
    width: 14px;
    height: 14px;
}

.st-crs {
    width: 22px;
    height: 22px;
    margin-left: 18px;
}

.st-epsg { margin-left: 2px; }

.st-msg {
    width: 22px;
    height: 22px;
    margin-left: 27px;
}
```
